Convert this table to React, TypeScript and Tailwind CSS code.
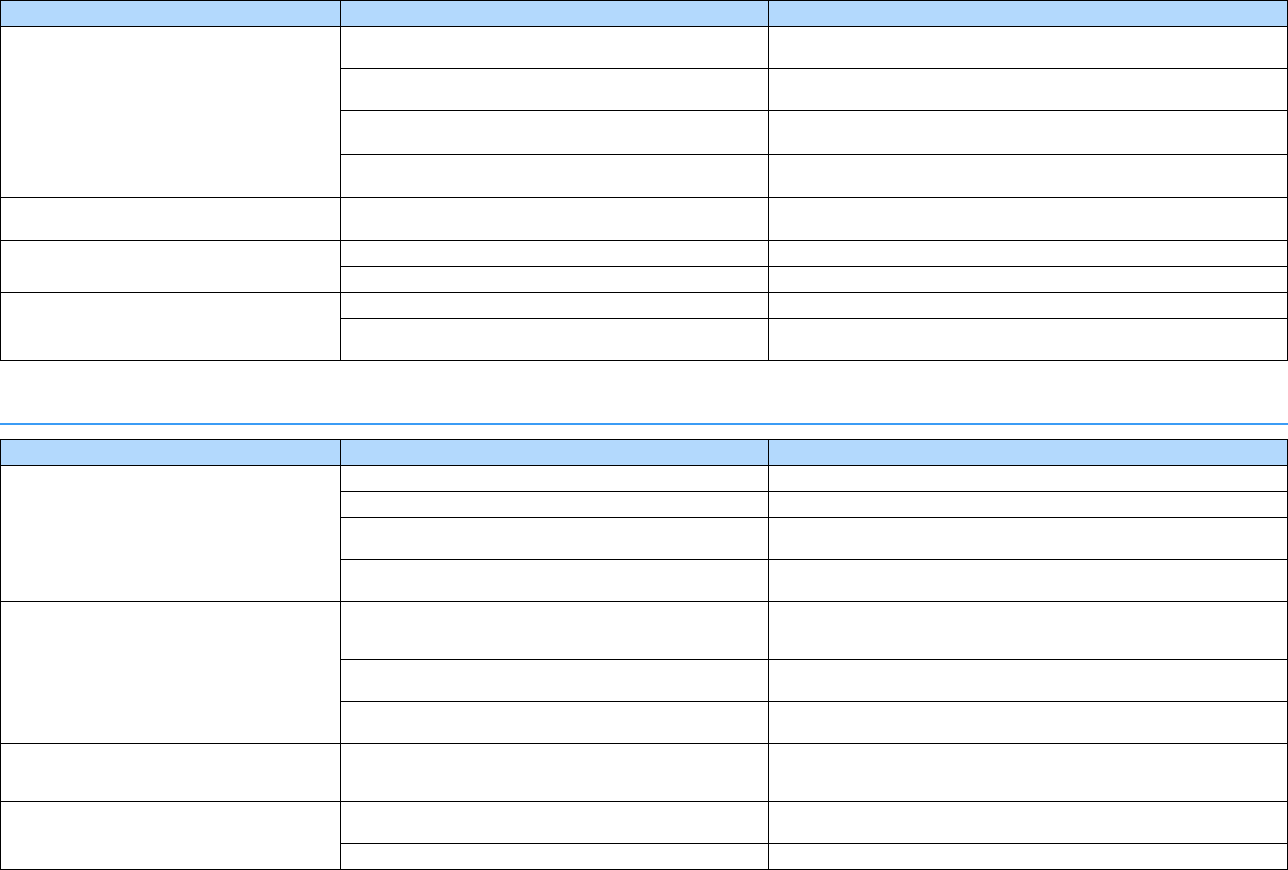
import React from 'react';

type Group = number[]; // row heights (px) of the rows in one rowspan group

const topGroups: Group[] = [[42, 42, 44, 43], [43], [26, 26], [26, 42]];
const bottomGroups: Group[] = [[26, 26, 42, 42], [58, 42, 42], [58], [42, 26]];

const cell = 'border border-black p-0';

function GridTable({ groups }: { groups: Group[] }) {
  return (
    <table className="w-full table-fixed border-collapse">
      <colgroup>
        <col className="w-[340px]" />
        <col className="w-[428px]" />
        <col />
      </colgroup>
      <thead>
        <tr style={{ height: 26 }} className="bg-[#b3d9fd]">
          <th className={cell}></th>
          <th className={cell}></th>
          <th className={cell}></th>
        </tr>
      </thead>
      <tbody>
        {groups.map((rows, g) =>
          rows.map((h, i) => (
            <tr key={`${g}-${i}`} style={{ height: h }}>
              {i === 0 && <td rowSpan={rows.length} className={cell}></td>}
              <td className={cell}></td>
              <td className={cell}></td>
            </tr>
          ))
        )}
      </tbody>
    </table>
  );
}

export default function App() {
  return (
    <div className="w-[1288px] bg-white font-['Liberation_Sans',sans-serif]">
      <GridTable groups={topGroups} />
      <div className="mt-[62px] h-[2px] bg-[#3b9cf5]" />
      <div className="mt-[14px]">
        <GridTable groups={bottomGroups} />
      </div>
    </div>
  );
}
